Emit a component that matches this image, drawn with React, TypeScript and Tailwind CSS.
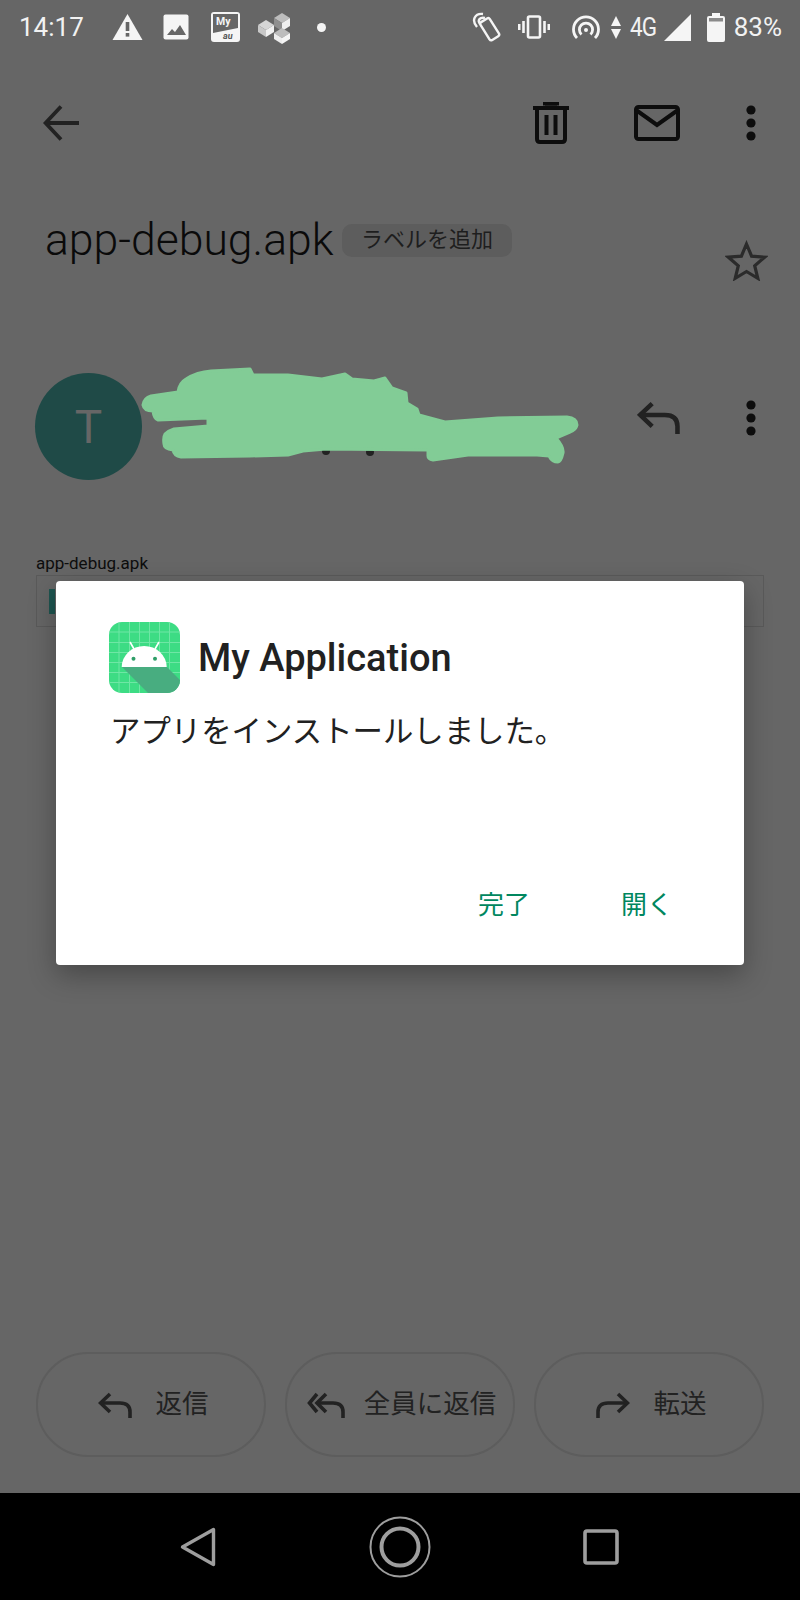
import React from "react";

function StatusLeft() {
  return (
    <div className="flex items-center">
      <span className="ml-[19px] w-[64px] text-[26px] leading-none text-[#f2f2f2]">14:17</span>
      {/* warning */}
      <svg className="ml-[29px]" width="31" height="28" viewBox="0 0 31 28">
        <path d="M15.5 1 L30.5 27 H0.5 Z" fill="#f5f5f5" />
        <rect x="13.7" y="9" width="3.6" height="9" fill="#666" />
        <rect x="13.7" y="20" width="3.6" height="3.6" fill="#666" />
      </svg>
      {/* image */}
      <svg className="ml-[20px]" width="26" height="26" viewBox="0 0 26 26">
        <rect x="0.5" y="0.5" width="25" height="25" rx="2" fill="#f5f5f5" />
        <path d="M4 21 L9 15 L12 18 L17 11 L23 21 Z" fill="#666" />
      </svg>
      {/* My au */}
      <svg className="ml-[22px]" width="29" height="30" viewBox="0 0 29 30">
        <rect x="0" y="0" width="29" height="30" rx="3" fill="#f5f5f5" />
        <path d="M2 2 H27 V16 L2 21 Z" fill="#666" />
        <text x="5" y="13" fontSize="10.5" fontWeight="700" fill="#f5f5f5" fontFamily="Roboto">My</text>
        <text x="12" y="27" fontSize="9" fontStyle="italic" fontWeight="700" fill="#555" fontFamily="Roboto">au</text>
      </svg>
      {/* cubes */}
      <svg className="ml-[17px]" width="34" height="34" viewBox="0 0 34 34">
        <path d="M17 8 L25 3 L33 8 L25 13 Z" fill="#bdbdbd" />
        <path d="M17 8 L25 13 V21 L17 16 Z" fill="#8f8f8f" />
        <path d="M25 13 L33 8 V16 L25 21 Z" fill="#f0f0f0" />
        <path d="M1 15 L9 10 L17 15 L9 20 Z" fill="#d6d6d6" />
        <path d="M1 15 L9 20 V27 L1 22 Z" fill="#c8c8c8" />
        <path d="M9 20 L17 15 V22 L9 27 Z" fill="#f0f0f0" />
        <path d="M17 23 L25 18 L33 23 L25 28 Z" fill="#bdbdbd" />
        <path d="M17 23 L25 28 V34 L17 29 Z" fill="#ededed" />
        <path d="M25 28 L33 23 V29 L25 34 Z" fill="#f5f5f5" />
      </svg>
      <span className="ml-[26px] h-[9px] w-[9px] rounded-full bg-[#f5f5f5]" />
    </div>
  );
}

function StatusRight() {
  return (
    <div className="ml-auto flex items-center">
      {/* nfc-like phone */}
      <svg width="32" height="30" viewBox="0 0 32 30" fill="none" stroke="#f5f5f5" strokeWidth="2.4">
        <rect x="13" y="7" width="11" height="21" rx="2" transform="rotate(-32 18 17)" />
        <path d="M6 15 C0 8 4 1 12 2" />
        <path d="M9 12 C6 8 9 5 14 6" />
      </svg>
      {/* vibrate */}
      <svg className="ml-[15px]" width="32" height="24" viewBox="0 0 32 24" fill="none" stroke="#f5f5f5" strokeWidth="2.6">
        <rect x="10" y="1.5" width="12" height="21" rx="1.5" />
        <path d="M5.5 6 V18 M1.2 9 V15 M26.5 6 V18 M30.8 9 V15" />
      </svg>
      {/* hotspot */}
      <svg className="ml-[22px]" width="28" height="24" viewBox="0 0 28 24" fill="none" stroke="#f5f5f5" strokeWidth="2.8">
        <path d="M5 23 A12.5 12.5 0 1 1 23 23" />
        <path d="M9.5 19.5 A6.6 6.6 0 1 1 18.5 19.5" />
        <circle cx="14" cy="15" r="2" fill="#f5f5f5" stroke="none" />
      </svg>
      {/* data arrows */}
      <svg className="ml-[11px]" width="10" height="23" viewBox="0 0 10 23">
        <path d="M5 0 L10 10 H0 Z" fill="#f5f5f5" />
        <path d="M5 23 L10 13 H0 Z" fill="#f5f5f5" />
      </svg>
      <span className="ml-[9px] w-[31px] text-[25px] leading-none tracking-[-1px] text-[#f2f2f2] [transform:scaleX(0.9)] origin-left">4G</span>
      {/* signal */}
      <svg className="ml-[3px]" width="27" height="27" viewBox="0 0 27 27">
        <path d="M27 0 V27 H0 Z" fill="#f5f5f5" />
      </svg>
      {/* battery */}
      <svg className="ml-[16px]" width="18" height="29" viewBox="0 0 18 29">
        <path d="M5 0 H13 V3 H16 Q18 3 18 5 V27 Q18 29 16 29 H2 Q0 29 0 27 V5 Q0 3 2 3 H5 Z" fill="#f5f5f5" />
        <rect x="2" y="5" width="14" height="3.5" fill="#8a8a8a" />
      </svg>
      <span className="ml-[9px] mr-[18px] text-[26px] leading-none text-[#f2f2f2]">83%</span>
    </div>
  );
}

function Dots() {
  return (
    <svg width="10" height="36" viewBox="0 0 10 36" fill="#0d0d0d">
      <circle cx="5" cy="5" r="4.6" />
      <circle cx="5" cy="18" r="4.6" />
      <circle cx="5" cy="31" r="4.6" />
    </svg>
  );
}

function ReplyIcon({ width = 34, height = 26, color = "#222" }: { width?: number; height?: number; color?: string }) {
  return (
    <svg width={width} height={height} viewBox="0 0 34 26" fill="none" stroke={color} strokeWidth="3.6">
      <path d="M12 2 L2.5 11 L12 20" />
      <path d="M3 11 H22 Q32 11 32 20 V26" />
    </svg>
  );
}

function AndroidIcon() {
  return (
    <svg width="71" height="71" viewBox="0 0 71 71">
      <defs>
        <clipPath id="round">
          <rect width="71" height="71" rx="13" />
        </clipPath>
      </defs>
      <g clipPath="url(#round)">
        <rect width="71" height="71" fill="#3ddc84" />
        <path
          d="M10 0V71M20.5 0V71M30.5 0V71M40.5 0V71M50.5 0V71M60.5 0V71M0 10H71M0 20.5H71M0 30.5H71M0 40.5H71M0 50.5H71M0 60.5H71"
          stroke="#6fe6a5"
          strokeWidth="1"
        />
        <path d="M13 45 H58 L71 58 V71 H39 Z" fill="#48ad80" />
        <path d="M21 20 L25 27 M50 20 L46 27" stroke="#fff" strokeWidth="1.6" />
        <path d="M12.7 45 A22.5 21 0 0 1 57.7 45 Z" fill="#fff" />
        <circle cx="24.5" cy="36.7" r="2" fill="#2f9e68" />
        <circle cx="46" cy="36.7" r="2" fill="#2f9e68" />
      </g>
    </svg>
  );
}

export default function App() {
  return (
    <div className="relative flex h-[1600px] w-[800px] flex-col overflow-hidden bg-[#666666] font-['Roboto','Noto_Sans_CJK_JP',sans-serif]">
      {/* Status bar */}
      <div className="flex h-[54px] items-center">
        <StatusLeft />
        <StatusRight />
      </div>

      {/* Toolbar */}
      <div className="flex h-[138px] items-center">
        <svg className="ml-[43px]" width="36" height="36" viewBox="0 0 36 36" fill="none" stroke="#222" strokeWidth="3.8">
          <path d="M18 1.5 L2.5 18 L18 34.5" />
          <path d="M3 18 H36" />
        </svg>
        <svg className="ml-auto" width="36" height="42" viewBox="0 0 36 42" fill="none" stroke="#0d0d0d" strokeWidth="4">
          <path d="M0 6 H36 M12 3.5 V1.8 H24 V3.5" />
          <path d="M4 6 V37 Q4 40 7 40 H29 Q32 40 32 37 V6" />
          <path d="M13.5 13 V33 M22.5 13 V33" />
        </svg>
        <svg className="ml-[65px]" width="46" height="36" viewBox="0 0 46 36" fill="none" stroke="#0d0d0d" strokeWidth="4">
          <rect x="2" y="2" width="42" height="32" rx="2.5" />
          <path d="M2 5 L23 20 L44 5" />
        </svg>
        <div className="ml-[66px] mr-[44px] flex">
          <Dots />
        </div>
      </div>

      {/* Subject */}
      <div className="flex h-[90px] items-start">
        <div className="ml-[45px] mt-[26px] flex items-center">
          <span className="w-[289px] whitespace-nowrap text-[44.5px] leading-[44px] font-light text-[#0a0a0a]">app-debug.apk</span>
          <span className="ml-[8px] flex h-[33px] w-[170px] items-center justify-center rounded-[10px] bg-[#5d5d5d] text-[22px] leading-none text-[#1e1e1e]">
            ラベルを追加
          </span>
        </div>
        <svg className="ml-auto mr-[32px] mt-[48px]" width="43" height="41" viewBox="0 0 43 41" fill="none" stroke="#2b2b2b" strokeWidth="3.2">
          <path d="M21.5 4 L26.6 16.2 L39.6 17.2 L29.7 25.7 L32.8 38.3 L21.5 31.5 L10.2 38.3 L13.3 25.7 L3.4 17.2 L16.4 16.2 Z" />
        </svg>
      </div>

      {/* Sender */}
      <div className="relative mt-[91px] flex h-[107px] items-center">
        <div className="ml-[35px] flex h-[107px] w-[107px] items-center justify-center rounded-full bg-[#1f4a47] text-[46px] leading-none text-[#666666]">
          T
        </div>
        {/* scribble drawn over the sender name */}
        <svg className="absolute left-[141px] top-[-7px]" width="440" height="100" viewBox="141 366 440 100">
          <circle cx="326" cy="451" r="4" fill="#222" />
          <circle cx="370" cy="452" r="4" fill="#222" />
          <path
            fill="#82cc96"
            stroke="#82cc96"
            strokeWidth="3"
            strokeLinejoin="round"
            d="M143 405 Q144 398 151 396 L178 392 Q179 383 186 379 Q197 372 211 371 L250 369 L253 375 L288 375 L322 379 L345 374 L352 379 L374 381 L385 378 L392 388 L406 393 L407 403 L417 409 L419 415 L445 422 L498 418 L567 417 Q577 418 577 425 Q576 430 570 432 L556 438 Q564 447 563 453 Q561 462 558 462 Q552 462 549 456 L537 455 L498 455 L468 455 L433 460 Q428 459 428 456 V450 L326 449 L303 451 L288 455 L250 456 L181 457 Q174 456 173 450 Q164 449 164 444 Q163 437 165 434 Q168 431 174 429 L208 426 V418 L158 420 Q154 419 153 411 Q144 411 143 405 Z"
          />
        </svg>
        <div className="ml-auto flex items-center">
          <div className="mb-[18px]">
            <ReplyIcon width={43} height={33} />
          </div>
          <div className="ml-[66px] mr-[44px] mb-[17px] flex">
            <Dots />
          </div>
        </div>
      </div>

      {/* Attachment */}
      <div className="mt-[74px] ml-[36px] text-[17px] leading-[18px] text-[#0d0d0d]">app-debug.apk</div>
      <div className="ml-[36px] mt-[3px] flex h-[52px] w-[728px] items-center border border-[#5a5a5a]">
        <div className="ml-[12px] h-[25px] w-[6px] bg-[#1e5550]" />
      </div>

      <div className="flex-1" />

      {/* Actions */}
      <div className="mb-[36px] ml-[36px] flex gap-[19px]">
        <div className="flex h-[105px] w-[230px] items-center justify-center rounded-[52px] border-2 border-[#5d5d5d] pl-[4px] text-[26.5px] leading-none text-[#222222]">
          <ReplyIcon />
          <span className="ml-[24px]">返信</span>
        </div>
        <div className="flex h-[105px] w-[230px] items-center justify-center rounded-[52px] border-2 border-[#5d5d5d] pl-[3px] text-[26.5px] leading-none text-[#222222]">
          <svg width="38" height="26" viewBox="0 0 38 26" fill="none" stroke="#222" strokeWidth="3.6">
            <path d="M10 2 L2.5 11 L10 20" />
            <path d="M19 2 L10 11 L19 20" />
            <path d="M11 11 H26 Q36 11 36 20 V26" />
          </svg>
          <span className="ml-[19px]">全員に返信</span>
        </div>
        <div className="flex h-[105px] w-[230px] items-center justify-center rounded-[52px] border-2 border-[#5d5d5d] pl-[4px] text-[26.5px] leading-none text-[#222222]">
          <svg width="34" height="26" viewBox="0 0 34 26" fill="none" stroke="#222" strokeWidth="3.6">
            <path d="M22 2 L31.5 11 L22 20" />
            <path d="M31 11 H12 Q2 11 2 20 V26" />
          </svg>
          <span className="ml-[24px]">転送</span>
        </div>
      </div>

      {/* Nav bar */}
      <div className="flex h-[107px] items-center bg-black">
        <svg className="ml-[180px]" width="36" height="40" viewBox="0 0 36 40" fill="none" stroke="#9e9e9e" strokeWidth="3.4" strokeLinejoin="round">
          <path d="M33.5 2.5 V37.5 L2.5 20 Z" />
        </svg>
        <svg className="ml-[153px]" width="62" height="62" viewBox="0 0 62 62" fill="none" stroke="#9e9e9e">
          <circle cx="31" cy="31" r="29.5" strokeWidth="2" />
          <circle cx="31" cy="31" r="18.5" strokeWidth="4" />
        </svg>
        <svg className="ml-[152px]" width="36" height="36" viewBox="0 0 36 36" fill="none" stroke="#9e9e9e" strokeWidth="3.6">
          <rect x="2" y="2" width="32" height="32" rx="2" />
        </svg>
      </div>

      {/* Dialog */}
      <div className="absolute left-[56px] top-[581px] flex h-[384px] w-[688px] flex-col rounded-[4px] bg-white shadow-[0_10px_28px_rgba(0,0,0,0.3)]">
        <div className="ml-[53px] mt-[41px] flex items-center">
          <AndroidIcon />
          <span className="ml-[18px] text-[38px] font-medium leading-none text-[#212121]">My Application</span>
        </div>
        <div className="ml-[54px] mt-[19px] text-[30.4px] leading-[40px] text-[#212121]">アプリをインストールしました。</div>
        <div className="mt-auto mb-[46px] flex text-[26px] leading-[28px] text-[#00875f]">
          <span className="ml-[422px]">完了</span>
          <span className="ml-[91px]">開く</span>
        </div>
      </div>
    </div>
  );
}
